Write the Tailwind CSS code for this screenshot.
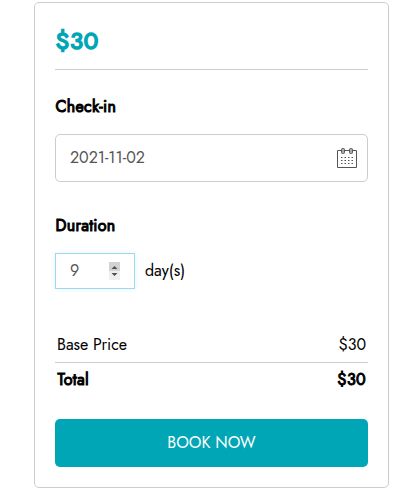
<!DOCTYPE html>
<html lang="en">
  <head>
    <meta charset="UTF-8" />
    <meta name="viewport" content="width=device-width, initial-scale=1.0" />
    <title>Book Now</title>
    <script src="https://cdn.jsdelivr.net/npm/@tailwindcss/browser@4"></script>
  </head>
  <body class="bg-white font-[Jost,Lato,sans-serif] text-base text-black overflow-hidden">
    <form class="ml-[34px] mt-0.5 flex h-[486px] w-[355px] flex-col rounded-[5px] border border-[#ccc] px-5">
      <!--price-->
      <h2 class="h-[67px] shrink-0 border-b border-[#ccc] pt-5 pl-[0.5px] text-2xl/9 font-normal tracking-[0.6px] text-[#00a6b6] [-webkit-text-stroke:1.6px]">$30</h2>

      <!--check-in date-->
      <label class="mt-[25px] block pl-[0.5px] leading-6 tracking-[0.3px] [-webkit-text-stroke:1px]" for="checkin">Check-in</label>
      <div class="mt-[15px] flex h-12 shrink-0 items-center justify-between rounded-[5px] border border-[#ccc] pr-2.5 pl-3.5">
        <span id="checkin" class="pb-px text-[#555]">2021-11-02</span>
        <svg class="size-5" viewBox="0 0 20 20" fill="none">
          <path d="M.5 2.5H19.5V19.5H.5Z" stroke="#555" />
          <rect x="4.5" y=".5" width="3" height="5" rx="1" fill="#aaa" stroke="#555" />
          <rect x="12.5" y=".5" width="3" height="5" rx="1" fill="#aaa" stroke="#555" />
          <path d="M4 9.5H16M4 12.5H16M4 15.5H16" stroke="#555" stroke-width="1.2" stroke-dasharray="1.5 2" />
        </svg>
      </div>

      <!--number of days-->
      <label class="mt-8 block pl-[0.5px] leading-6 tracking-[0.3px] [-webkit-text-stroke:1px]" for="days">Duration</label>
      <div class="mt-[15px] flex items-center">
        <div class="flex h-9 w-20 items-center justify-between border border-[#9bdaec] pr-3.5 pl-3.5 shadow-[0_0_5px_#e0f4fa]">
          <span id="days" class="pb-px text-[#555]">9</span>
          <svg class="h-[18px] w-[11px]" viewBox="0 0 11 18">
            <path d="M0 0H11V9H0Z" fill="#d2d2d2" />
            <path d="M0 9H11V18H0Z" fill="#efefef" />
            <path d="M2.5 7L5.5 4L8.5 7ZM2.5 11L5.5 14L8.5 11Z" fill="#505050" />
          </svg>
        </div>
        <span class="ml-2.5 pb-px">day(s)</span>
      </div>

      <!--price summary-->
      <div class="mt-[38px] flex h-[36px] shrink-0 items-center justify-between border-b border-[#ccc] px-0.5">
        <span>Base Price</span>
        <span>$30</span>
      </div>
      <div class="flex h-[34px] shrink-0 items-center justify-between px-0.5 tracking-[0.35px] [-webkit-text-stroke:1px]">
        <span class="pl-[0.5px]">Total</span>
        <span>$30</span>
      </div>

      <button class="mt-[22px] h-12 shrink-0 rounded-[5px] bg-[#00a6b6] pb-px text-white" type="button">BOOK NOW</button>
    </form>
  </body>
</html>
